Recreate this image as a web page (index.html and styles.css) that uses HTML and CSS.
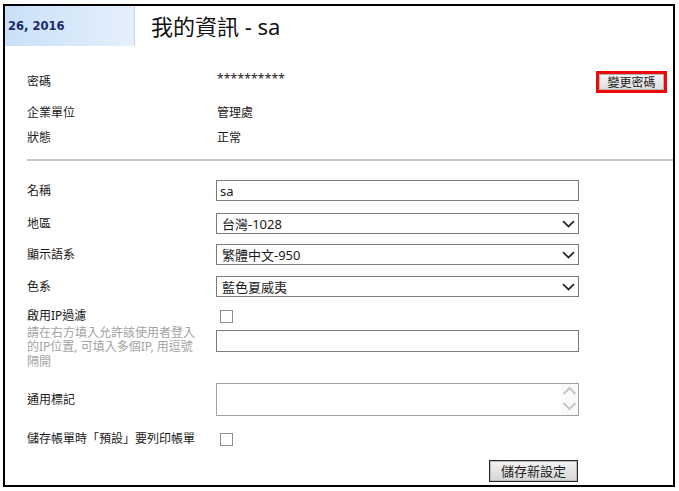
FILE: index.html
```html
<!DOCTYPE html>
<html lang="zh-Hant">
<head>
    <meta charset="UTF-8">
    <title>我的資訊</title>
    <link rel="stylesheet" href="styles.css">
</head>
<body>
    <div class="panel">
        <div class="head">
            <div class="date">26, 2016</div>
            <h1 class="title">我的資訊 - sa</h1>
        </div>

        <div class="info">
            <div class="info-row first">
                <span class="label">密碼</span>
                <span class="value stars">**********</span>
                <button type="button" class="btn-change">變更密碼</button>
            </div>
            <div class="info-row">
                <span class="label">企業單位</span>
                <span class="value">管理處</span>
            </div>
            <div class="info-row">
                <span class="label">狀態</span>
                <span class="value">正常</span>
            </div>
        </div>

        <div class="sep"></div>

        <form class="form">
            <div class="row r-name">
                <label class="label">名稱</label>
                <input type="text" class="field" value="sa">
            </div>
            <div class="row r-area">
                <label class="label">地區</label>
                <div class="select-wrap">
                    <select class="field">
                        <option>台灣-1028</option>
                    </select>
                    <svg class="chev" width="13" height="8" viewBox="0 0 13 8"><path d="M1 1.2 6.5 6.5 12 1.2" fill="none" stroke="#2b2b2b" stroke-width="1.8"/></svg>
                </div>
            </div>
            <div class="row r-lang">
                <label class="label">顯示語系</label>
                <div class="select-wrap">
                    <select class="field">
                        <option>繁體中文-950</option>
                    </select>
                    <svg class="chev" width="13" height="8" viewBox="0 0 13 8"><path d="M1 1.2 6.5 6.5 12 1.2" fill="none" stroke="#2b2b2b" stroke-width="1.8"/></svg>
                </div>
            </div>
            <div class="row r-color">
                <label class="label">色系</label>
                <div class="select-wrap">
                    <select class="field">
                        <option>藍色夏威夷</option>
                    </select>
                    <svg class="chev" width="13" height="8" viewBox="0 0 13 8"><path d="M1 1.2 6.5 6.5 12 1.2" fill="none" stroke="#2b2b2b" stroke-width="1.8"/></svg>
                </div>
            </div>
            <div class="row r-ip">
                <div class="label">
                    <div class="ip-title">啟用IP過濾</div>
                    <div class="help">請在右方填入允許該使用者登入的IP位置, 可填入多個IP, 用逗號隔開</div>
                </div>
                <div class="ip-fields">
                    <input type="checkbox" class="check">
                    <input type="text" class="field ip-input">
                </div>
            </div>
            <div class="row r-memo">
                <label class="label">通用標記</label>
                <div class="memo-wrap">
                    <textarea class="memo"></textarea>
                    <svg class="scroll" width="17" height="31" viewBox="0 0 17 31">
                        <path d="M2.5 10 8.5 4 14.5 10" fill="none" stroke="#c4c4c4" stroke-width="1.8"/>
                        <path d="M2.5 19 8.5 25 14.5 19" fill="none" stroke="#c4c4c4" stroke-width="1.8"/>
                    </svg>
                </div>
            </div>
            <div class="row r-print">
                <label class="label">儲存帳單時「預設」要列印帳單</label>
                <div><input type="checkbox" class="check"></div>
            </div>
            <div class="row r-save">
                <span></span>
                <button type="button" class="btn-save">儲存新設定</button>
            </div>
        </form>
    </div>
</body>
</html>
```

FILE: styles.css
```css
body {
    margin: 0;
    padding: 0;
    font-family: "Noto Sans", "Noto Sans CJK TC", sans-serif;
    font-size: 12px;
    color: #1a1a1a;
    background: #fff;
}
.panel {
    box-sizing: border-box;
    width: 672px;
    height: 483px;
    margin: 4px 0 0 3px;
    border: 2px solid #000;
}
.head {
    display: flex;
    height: 40px;
}
.date {
    width: 130px;
    height: 40px;
    line-height: 40px;
    padding-left: 3px;
    box-sizing: border-box;
    background: linear-gradient(to right, #c9e0f8, #e5f0fc);
    border-right: 1px solid #bcd6ef;
    font-family: "DejaVu Sans", sans-serif;
    font-weight: bold;
    font-size: 11.5px;
    color: #1c2a6b;
}
.title {
    margin: 0 0 0 16px;
    font-family: "Noto Sans", "Noto Sans CJK TC", sans-serif;
    font-size: 22px;
    font-weight: normal;
    line-height: 40px;
    color: #111;
}
.info {
    margin-top: 23px;
    padding: 0 6px 0 22px;
}
.info-row {
    display: grid;
    grid-template-columns: 190px 1fr auto;
    align-items: center;
    height: 25px;
    line-height: 25px;
}
.info-row.first {
    margin-bottom: 6px;
}
.stars {
    font-size: 12px;
    letter-spacing: 0.2px;
    position: relative;
    top: -3px;
}
.btn-change {
    width: 71px;
    height: 22px;
    padding: 0;
    border: 3px solid #ee0a0a;
    box-shadow: inset 0 0 0 1px #b5b5b5;
    background: linear-gradient(#f7f7f7, #dcdcdc);
    font-family: "Noto Sans CJK TC", sans-serif;
    font-size: 12px;
    line-height: 14px;
    color: #222;
}
.sep {
    height: 2px;
    background: #c6c6c6;
    margin: 9px 0 0 22px;
}
.form {
    padding: 19px 0 0 22px;
    margin: 0;
}
.row {
    display: grid;
    grid-template-columns: 189px 363px;
    align-items: center;
}
.row .label {
    line-height: 14px;
}
.field {
    box-sizing: border-box;
    width: 363px;
    height: 21px;
    margin: 0;
    padding: 0 3px;
    border: 1px solid #7a7a7a;
    border-radius: 0;
    background: #fff;
    font-family: "Noto Sans", "Noto Sans CJK TC", sans-serif;
    font-size: 13px;
    color: #1a1a1a;
    outline: none;
}
select.field {
    -webkit-appearance: none;
    appearance: none;
    padding-left: 5px;
}
.select-wrap, .memo-wrap {
    position: relative;
    width: 363px;
}
.chev {
    position: absolute;
    right: 4px;
    top: 7px;
    pointer-events: none;
}
.r-area {
    margin-top: 12px;
}
.r-lang {
    margin-top: 10px;
}
.r-color {
    margin-top: 11px;
}
.r-ip {
    margin-top: 11px;
    align-items: start;
}
.ip-title {
    line-height: 16px;
}
.help {
    width: 175px;
    margin-top: 2px;
    line-height: 14.4px;
    color: #a3a3a3;
}
.ip-fields {
    display: flex;
    flex-direction: column;
    align-items: flex-start;
}
.check {
    -webkit-appearance: none;
    appearance: none;
    box-sizing: border-box;
    width: 13px;
    height: 13px;
    margin: 0 0 0 4px;
    border: 1px solid #8c8c8c;
    background: #fff;
    display: block;
}
.ip-fields .check {
    margin-top: 2px;
}
.ip-input {
    height: 22px;
    margin-top: 7px;
}
.r-memo {
    margin-top: 14px;
}
.memo {
    box-sizing: border-box;
    display: block;
    width: 363px;
    height: 33px;
    margin: 0;
    border: 1px solid #a2a2a2;
    border-radius: 0;
    resize: none;
    overflow: hidden;
    background: #fff;
}
.scroll {
    position: absolute;
    right: 1px;
    top: 1px;
    background: #f9f9f9;
    pointer-events: none;
}
.r-print {
    margin-top: 16px;
}
.r-save {
    margin-top: 14px;
}
.btn-save {
    justify-self: end;
    margin-right: 1px;
    width: 89px;
    height: 22px;
    padding: 0;
    border: 1px solid #262626;
    box-shadow: inset 0 0 0 1px #bdbdbd;
    background: linear-gradient(#f3f3f3, #d6d6d6);
    font-family: "Noto Sans CJK TC", sans-serif;
    font-size: 13px;
    line-height: 16px;
    color: #222;
}
```
